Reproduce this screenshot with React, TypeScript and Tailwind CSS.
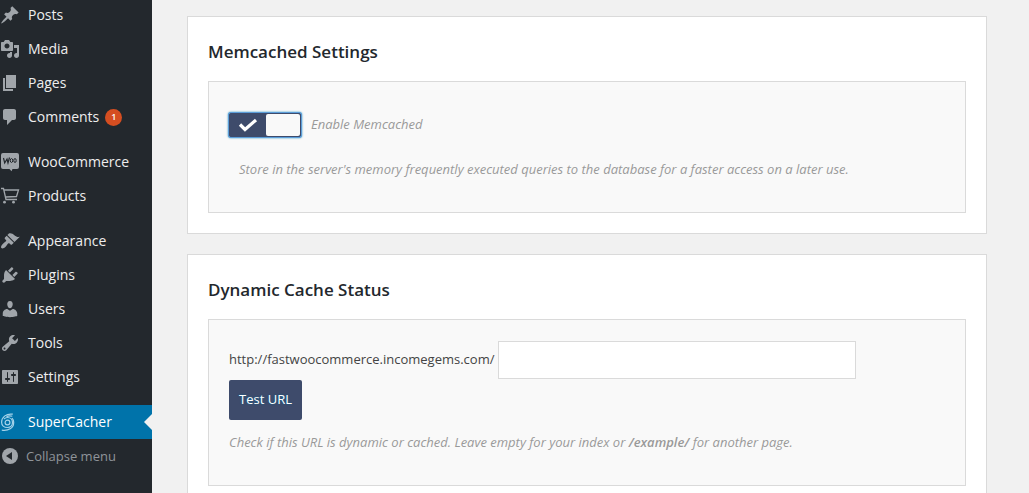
import React, { useState } from "react";

interface MenuItem {
  label: string;
  icon: React.ReactNode;
  badge?: number;
  active?: boolean;
}

const Icon: React.FC<{ children: React.ReactNode }> = ({ children }) => (
  <svg
    viewBox="0 0 20 20"
    className="size-5 shrink-0 fill-current"
    aria-hidden="true"
  >
    {children}
  </svg>
);

const menuGroups: MenuItem[][] = [
  [
    {
      label: "Posts",
      icon: (
        <path d="M10.44 3.02l1.82-1.82 6.36 6.35-1.83 1.82c-1.05-.68-2.48-.57-3.41.36l-.75.75c-.92.93-1.04 2.35-.35 3.41l-1.83 1.82-2.41-2.41-2.8 2.79c-.42.42-3.38 2.71-3.8 2.29s1.86-3.39 2.28-3.81l2.79-2.79L4.1 9.36l1.83-1.82c1.05.69 2.48.57 3.4-.36l.75-.75c.93-.92 1.05-2.35.36-3.41z" />
      ),
    },
    {
      label: "Media",
      icon: (
        <path d="M13 11V4c0-.55-.45-1-1-1h-1.67L9 1H5L3.67 3H2c-.55 0-1 .45-1 1v7c0 .55.45 1 1 1h10c.55 0 1-.45 1-1zM7 4.5c1.38 0 2.5 1.12 2.5 2.5S8.38 9.5 7 9.5 4.5 8.38 4.5 7 5.62 4.5 7 4.5zM14 6h5v10.5c0 1.38-1.12 2.5-2.5 2.5S14 17.88 14 16.5s1.12-2.5 2.5-2.5c.17 0 .34.02.5.05V9h-3V6zm-4 8.05V13h2v3.5c0 1.38-1.12 2.5-2.5 2.5S7 17.88 7 16.5 8.12 14 9.5 14c.17 0 .34.02.5.05z" />
      ),
    },
    {
      label: "Pages",
      icon: <path d="M6 15V2h10v13H6zm-1 1h8v2H3V5h2v11z" />,
    },
    {
      label: "Comments",
      badge: 1,
      icon: (
        <path d="M5 2h9c1.1 0 2 .9 2 2v7c0 1.1-.9 2-2 2h-2l-5 5v-5H5c-1.1 0-2-.9-2-2V4c0-1.1.9-2 2-2z" />
      ),
    },
  ],
  [
    {
      label: "WooCommerce",
      icon: (
        <>
          <path d="M3 1h14a2 2 0 0 1 2 2v12a2 2 0 0 1-2 2h-4.500l-1 2.200L9.500 17H3a2 2 0 0 1-2-2V3a2 2 0 0 1 2-2z" />
          <path
            d="M3.500 6l1.200 5L7 7l1 4 1.500-5.500"
            fill="none"
            stroke="#23282d"
            strokeWidth="1.200"
          />
          <ellipse cx="11.500" cy="8.500" rx="1.200" ry="2" fill="none" stroke="#23282d" />
          <ellipse cx="15" cy="8.500" rx="1.200" ry="2" fill="none" stroke="#23282d" />
        </>
      ),
    },
    {
      label: "Products",
      icon: (
        <>
          <path
            d="M1 2.500h2.500l2.500 11h11M4 4h14.500l-2 6.500L5.400 11"
            fill="none"
            stroke="currentColor"
            strokeWidth="1.300"
          />
          <circle cx="4.500" cy="16.200" r="1.400" />
          <circle cx="13.500" cy="16.200" r="1.400" />
        </>
      ),
    },
  ],
  [
    {
      label: "Appearance",
      icon: (
        <path d="M14.48 11.06L7.41 3.99l1.5-1.5c.5-.56 2.3-.47 3.51.32 1.21.8 1.43 1.28 2.91 2.1 1.18.64 2.45 1.26 4.45.85zm-.71.71L6.7 4.7 4.93 6.47c-.39.39-.39 1.02 0 1.41l1.06 1.06c.39.39.39 1.03 0 1.42-.6.6-1.43 1.11-2.21 1.69-.35.26-.7.53-1.01.84C1.43 14.23.4 16.08 1.4 17.07c.99 1 2.84-.03 4.18-1.36.31-.31.58-.66.85-1.02.57-.78 1.08-1.61 1.69-2.21.39-.39 1.02-.39 1.41 0l1.06 1.06c.39.39 1.02.39 1.41 0z" />
      ),
    },
    {
      label: "Plugins",
      icon: (
        <path d="M13.11 4.36L9.87 7.6 8 5.73l3.24-3.24c.35-.34 1.05-.2 1.56.32.52.51.66 1.21.31 1.55zm-8 1.77l.91-1.12 9.01 9.01-1.19.84c-.71.71-2.63 1.16-3.82 1.16H6.14L4.9 17.26c-.59.59-1.54.59-2.12 0-.59-.58-.59-1.53 0-2.12l1.24-1.24v-3.88c0-1.13.4-3.19 1.09-3.89zm7.26 3.97l3.24-3.24c.34-.35 1.04-.21 1.55.31.52.51.66 1.21.31 1.55l-3.24 3.25z" />
      ),
    },
    {
      label: "Users",
      icon: (
        <path d="M10 9.25c-2.27 0-2.73-3.44-2.73-3.44C7 4.02 7.82 2 9.97 2c2.16 0 2.98 2.02 2.71 3.81 0 0-.41 3.44-2.68 3.44zm0 2.57L12.72 10c2.39 0 4.52 2.33 4.52 4.53v2.49s-3.65 1.13-7.24 1.13c-3.65 0-7.24-1.13-7.24-1.13v-2.49c0-2.25 1.94-4.48 4.47-4.48z" />
      ),
    },
    {
      label: "Tools",
      icon: (
        <path d="M16.68 9.77c-1.34 1.34-3.3 1.67-4.95.99l-5.41 6.52c-.99.99-2.59.99-3.58 0s-.99-2.59 0-3.57l6.52-5.42c-.68-1.65-.35-3.61.99-4.95 1.28-1.28 3.12-1.62 4.72-1.06l-2.89 2.89 2.82 2.82 2.86-2.87c.53 1.58.18 3.39-1.08 4.65zM3.81 16.21c.4.39 1.04.39 1.43 0 .4-.4.4-1.04 0-1.43-.39-.4-1.03-.4-1.43 0-.39.39-.39 1.03 0 1.43z" />
      ),
    },
    {
      label: "Settings",
      icon: (
        <path d="M18 16V4c0-.55-.45-1-1-1H3c-.55 0-1 .45-1 1v12c0 .55.45 1 1 1h14c.55 0 1-.45 1-1zM8 11h1c.55 0 1 .45 1 1s-.45 1-1 1H8v1.5c0 .28-.22.5-.5.5s-.5-.22-.5-.5V13H6c-.55 0-1-.45-1-1s.45-1 1-1h1V5.500c0-.28.22-.5.5-.5s.5.22.5.5V11zm5-2h-1c-.55 0-1-.45-1-1s.45-1 1-1h1V5.500c0-.28.22-.5.5-.5s.5.22.5.5V7h1c.55 0 1 .45 1 1s-.45 1-1 1h-1v5.500c0 .28-.22.5-.5.5s-.5-.22-.5-.5V9z" />
      ),
    },
  ],
  [
    {
      label: "SuperCacher",
      active: true,
      icon: (
        <g fill="none" stroke="currentColor" strokeWidth="1.200">
          <circle cx="7.500" cy="10.500" r="2.400" />
          <path d="M12.800 2.200C6.500 1.200 1.600 5 1.600 10.200c0 3 2.400 5.300 5.900 5.300 2.800 0 5-2.200 5-5s-2.200-5-5-5c-1.300 0-2.500.5-3.400 1.500" />
          <path d="M12.300 4.300C10.300 3.700 8.300 3.800 6.500 4.600M1.800 18.200c6.500 1 11.900-2 11.900-7.700 0-1.800-.6-3.200-1.700-4.300" />
        </g>
      ),
    },
  ],
];

const Sidebar: React.FC = () => (
  <nav className="w-[152px] shrink-0 bg-[#23282d] text-sm text-[#eee]">
    <div className="-mt-0.5 flex flex-col gap-[11px]">
      {menuGroups.map((group) => (
        <ul key={group[0].label}>
          {group.map((item) => (
            <li key={item.label}>
              <a
                href="#"
                className={`relative flex h-[34px] items-center gap-2 ${
                  item.active ? "bg-[#0073aa] text-white" : ""
                }`}
              >
                <span
                  className={item.active ? "text-[#a5d3ea]" : "text-[#a0a5aa]"}
                >
                  <Icon>{item.icon}</Icon>
                </span>
                {item.label}
                {item.badge && (
                  <span className="-ml-0.5 flex size-[17px] items-center justify-center rounded-full bg-[#d54e21] text-[9px] font-semibold text-white">
                    {item.badge}
                  </span>
                )}
                {item.active && (
                  <span className="absolute right-0 border-y-8 border-r-8 border-y-transparent border-r-[#f1f1f1]" />
                )}
              </a>
            </li>
          ))}
        </ul>
      ))}
    </div>
    <button
      type="button"
      className="flex h-[34px] items-center gap-1.5 text-[13px] text-[#a0a5aa]"
    >
      <Icon>
        <circle cx="10" cy="10" r="8" />
        <path d="M12 6v8l-6-4z" fill="#23282d" />
      </Icon>
      <span className="text-[#8f9499]">Collapse menu</span>
    </button>
  </nav>
);

const Card: React.FC<{ title: string; children: React.ReactNode }> = ({
  title,
  children,
}) => (
  <section className="border border-[#dadada] bg-white p-5">
    <h2 className="mb-3.5 text-[17px] leading-[30px] font-semibold text-[#23282d]">
      {title}
    </h2>
    <div className="border border-[#dadada] bg-[#f9f9f9] px-5 pt-[21px] pb-[31px]">
      {children}
    </div>
  </section>
);

export default function App() {
  const [enabled, setEnabled] = useState(true);
  const [path, setPath] = useState("");

  return (
    <div className="flex h-screen overflow-hidden bg-[#f1f1f1] font-['Open_Sans','Noto_Sans',sans-serif] text-[13px] text-[#444]">
      <Sidebar />

      <main className="flex flex-1 flex-col gap-5 pt-4 pr-[42px] pl-[35px]">
        <Card title="Memcached Settings">
          <div className="flex items-center gap-2.5 pt-2.5">
            <button
              id="memcached"
              type="button"
              role="switch"
              aria-checked={enabled}
              onClick={() => setEnabled(!enabled)}
              className="flex h-6 w-[72px] items-stretch rounded-xs border border-[#3e4b6b] bg-[#3e4b6b] shadow-[0_0_0_1px_#5b9dd9,0_0_2px_1px_#1e8cbe]"
            >
              <span className="flex flex-1 items-center justify-center">
                <svg viewBox="0 0 20 14" className="h-3.5 w-5" aria-hidden="true">
                  <path
                    d="M2 6.500l5 5L18 2"
                    fill="none"
                    stroke="#fff"
                    strokeWidth="3.200"
                  />
                </svg>
              </span>
              <span className="w-[34px] rounded-xs bg-[#f9f9f9]" />
            </button>
            <label htmlFor="memcached" className="text-[#999] italic">
              Enable Memcached
            </label>
          </div>
          <p className="px-2.5 pt-5 leading-6 text-[#999] italic">
            Store in the server's memory frequently executed queries to the
            database for a faster access on a later use.
          </p>
        </Card>

        <Card title="Dynamic Cache Status">
          <div className="flex items-center gap-1">
            <label htmlFor="test-url">http://fastwoocommerce.incomegems.com/</label>
            <input
              id="test-url"
              type="text"
              value={path}
              onChange={(e) => setPath(e.target.value)}
              className="h-[38px] w-[358px] border border-[#dadada] bg-white px-2"
            />
          </div>
          <button
            type="button"
            className="mt-px h-10 rounded-xs bg-[#3e4b6b] px-2.5 text-white [text-shadow:0_0_2px_#006799]"
          >
            Test URL
          </button>
          <p className="pt-2.5 leading-6 text-[#999] italic">
            Check if this URL is dynamic or cached. Leave empty for your index or{" "}
            <strong className="font-semibold">/example/</strong> for another page.
          </p>
        </Card>
      </main>
    </div>
  );
}
